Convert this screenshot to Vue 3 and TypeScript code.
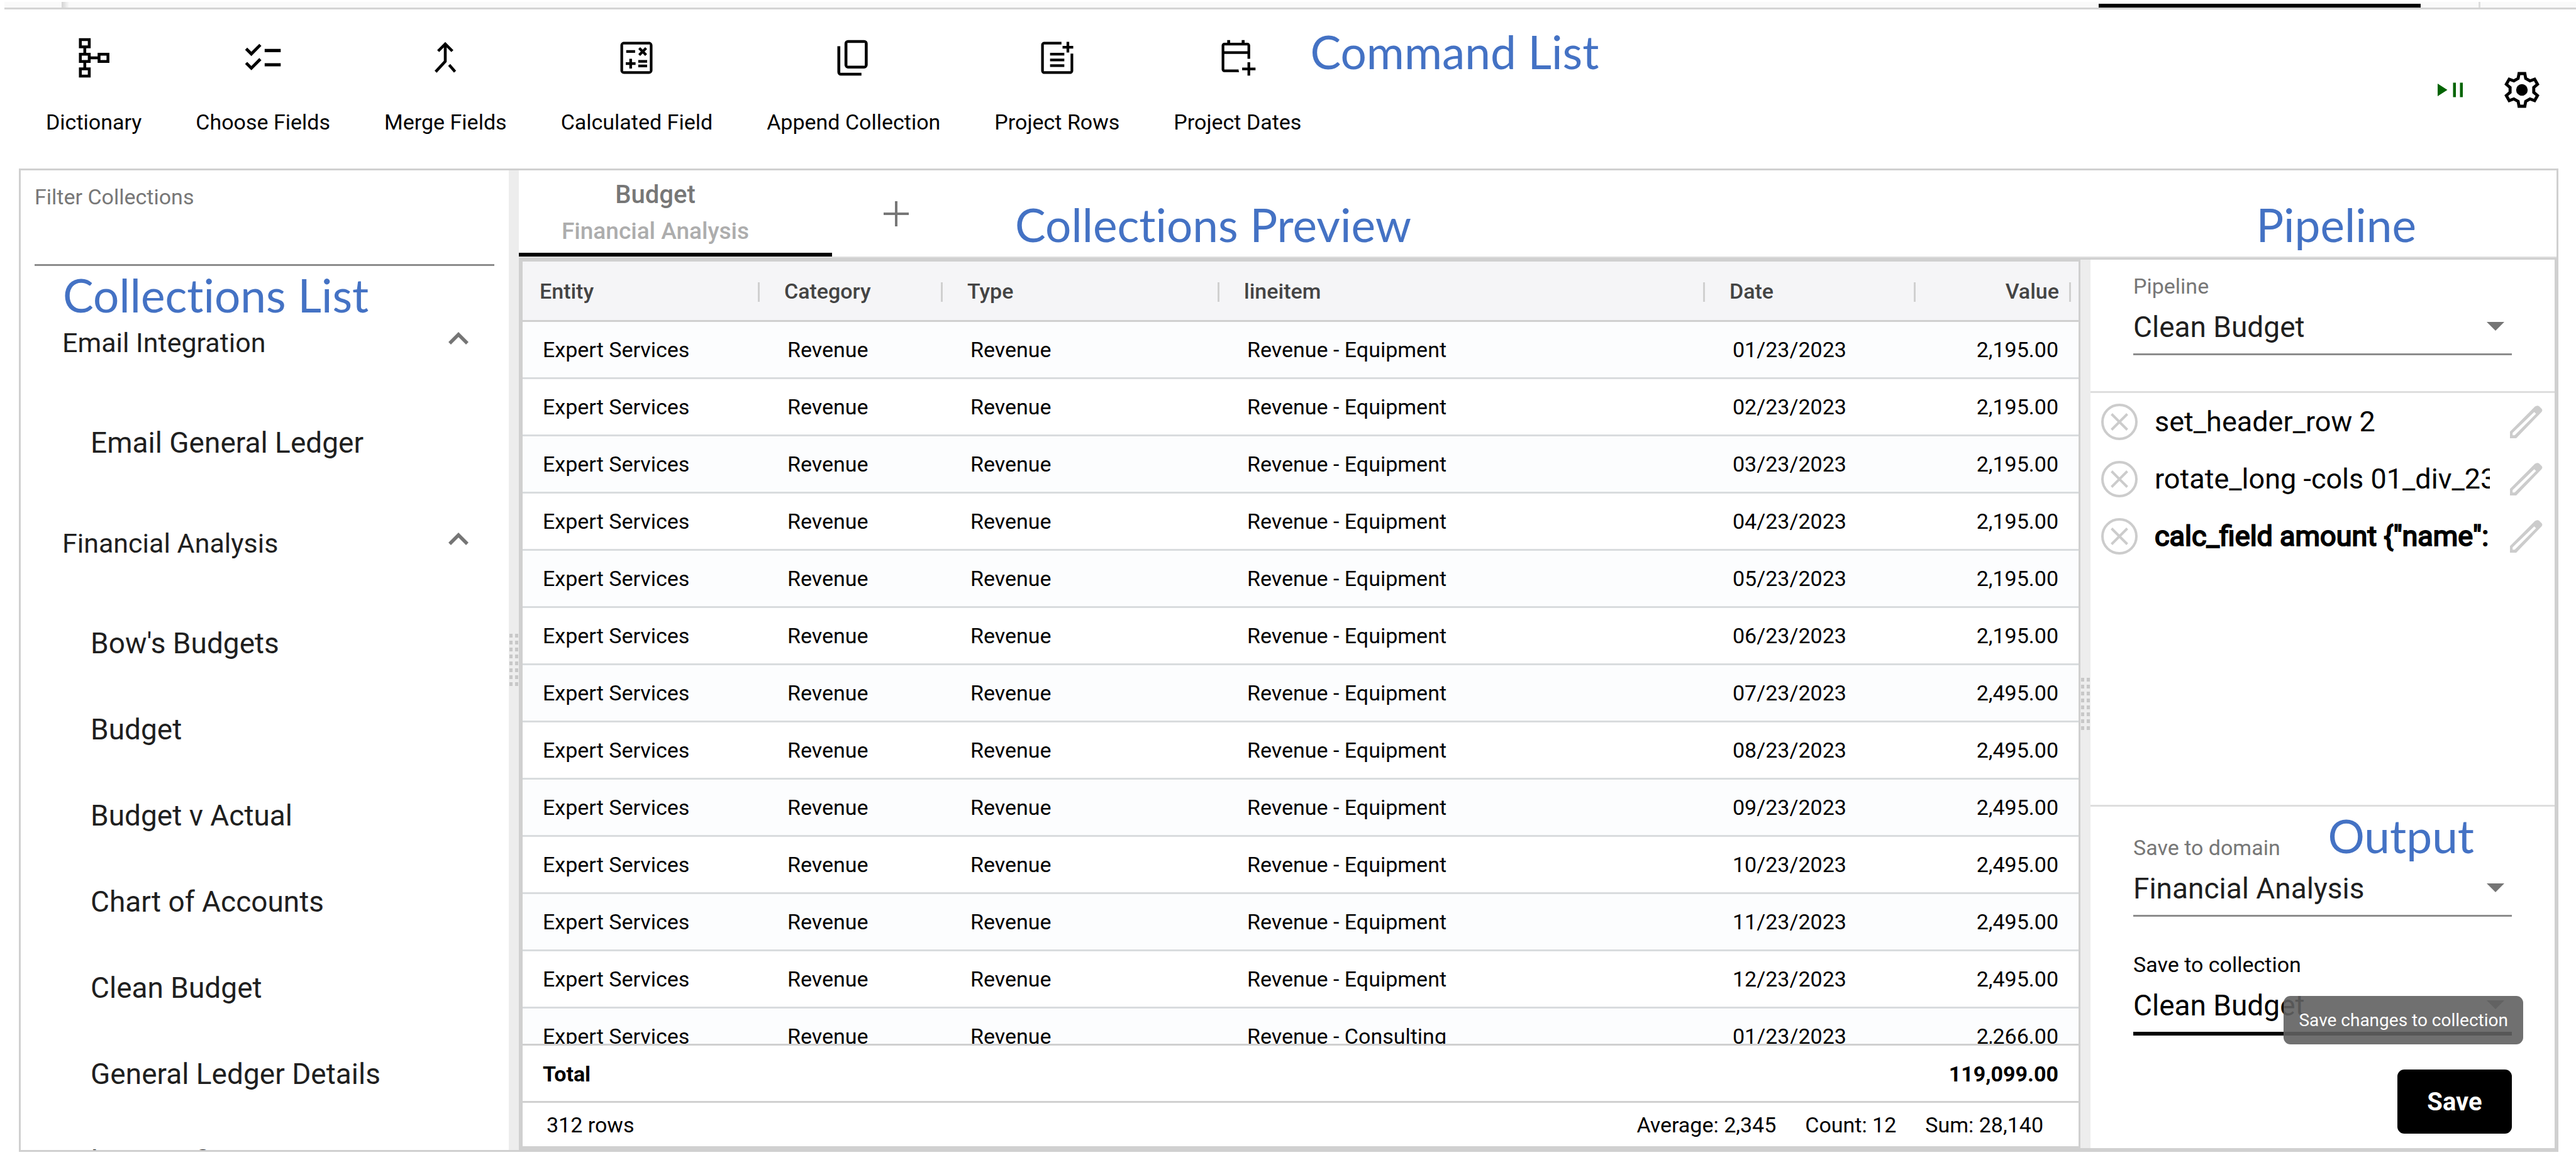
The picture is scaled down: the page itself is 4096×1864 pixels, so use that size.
<script setup lang="ts">
import { ref } from 'vue'

interface Command {
  label: string
  viewBox: string
  path?: string
  strokes?: string
}

interface Row {
  entity: string
  category: string
  type: string
  lineitem: string
  date: string
  value: string
}

interface Group {
  name: string
  items: string[]
}

interface Step {
  text: string
  active: boolean
}

const commands: Command[] = [
  {
    label: 'Dictionary',
    viewBox: '0 0 24 24',
    strokes: 'M4.5 1.8h5v4h-5zM4.5 10h5v4h-5zM4.5 18.2h5v4h-5zM15 10h5v4h-5zM7 5.8V10M7 14V18.2M9.5 12H15',
  },
  {
    label: 'Choose Fields',
    viewBox: '0 0 24 24',
    path: 'M22 7h-9v1.8h9V7zm0 8h-9v1.8h9v-1.8zM5.54 11L2 7.46l1.2-1.2 2.34 2.3 4.44-4.44 1.200 1.200L5.54 11zm0 8L2 15.46l1.2-1.2 2.34 2.3 4.44-4.44 1.200 1.200L5.54 19z',
  },
  {
    label: 'Merge Fields',
    viewBox: '0 0 24 24',
    strokes: 'M8 8.2L12 4.2L16 8.2M12 4.4V14L6.6 19.8M14.2 16L17.5 19.8',
  },
  {
    label: 'Calculated Field',
    viewBox: '0 0 24 24',
    path: 'M19 3H5c-1.1 0-2 .9-2 2v14c0 1.1.9 2 2 2h14c1.1 0 2-.9 2-2V5c0-1.1-.9-2-2-2zm0 16.500H4.500V4.500h15v15H19zM6.250 7.720h5v1.500h-5zM13 15.750h5v1.500h-5zM13 13.250h5v1.500h-5zM8 18h1.500v-2h2v-1.500h-2v-2H8v2H6V16h2zM14.090 10.950l1.410-1.410 1.410 1.410 1.060-1.060-1.410-1.420 1.410-1.410L16.910 6 15.500 7.410 14.090 6l-1.060 1.060 1.410 1.410-1.410 1.420z',
  },
  {
    label: 'Append Collection',
    viewBox: '0 -960 960 960',
    path: 'M360-240q-33 0-56.500-23.500T280-320v-480q0-33 23.500-56.500T360-880h360q33 0 56.500 23.500T800-800v480q0 33-23.500 56.500T720-240H360Zm-15-65h390v-510H345v510ZM200-80q-33 0-56.500-23.500T120-160v-580h65v595h475v65H200Z',
  },
  {
    label: 'Project Rows',
    viewBox: '0 0 24 24',
    path: 'M14.400 3H4.800C3.800 3 3 3.800 3 4.800v14.400c0 1 .8 1.800 1.800 1.800h14.400c1 0 1.800-.8 1.800-1.800V9.600h-1.500v9.900h-15v-15h9.900V3zM17.250 3h1.500v2.250H21v1.500h-2.250V9h-1.500V6.750H15v-1.500h2.250V3zM8 9.200h8v1.500H8zM8 12.400h8v1.500H8zM8 15.600h8v1.500H8z',
  },
  {
    label: 'Project Dates',
    viewBox: '0 -960 960 960',
    path: 'M700-80v-120H580v-60h120v-120h60v120h120v60H760v120h-60Zm-520-80q-24 0-42-18t-18-42v-540q0-24 18-42t42-18h65v-60h65v60h260v-60h65v60h65q24 0 42 18t18 42v302q-15-2-30-2t-30 2v-112H180v350h320q0 15 3 30t8 30H180Zm0-470h520v-130H180v130Z',
  },
]

const groups: Group[] = [
  { name: 'Email Integration', items: ['Email General Ledger'] },
  {
    name: 'Financial Analysis',
    items: [
      "Bow's Budgets",
      'Budget',
      'Budget v Actual',
      'Chart of Accounts',
      'Clean Budget',
      'General Ledger Details',
      'Income Statement',
    ],
  },
]

const columns: string[] = ['Entity', 'Category', 'Type', 'lineitem', 'Date', 'Value']

const monthly: string[] = [
  '2,195.00', '2,195.00', '2,195.00', '2,195.00', '2,195.00', '2,195.00',
  '2,495.00', '2,495.00', '2,495.00', '2,495.00', '2,495.00', '2,495.00',
]

const base = { entity: 'Expert Services', category: 'Revenue', type: 'Revenue' }

const rows: Row[] = [
  ...monthly.map((value, i) => ({
    ...base,
    lineitem: 'Revenue - Equipment',
    date: `${String(i + 1).padStart(2, '0')}/23/2023`,
    value,
  })),
  { ...base, lineitem: 'Revenue - Consulting', date: '01/23/2023', value: '2,266.00' },
]

const steps: Step[] = [
  { text: 'set_header_row 2', active: false },
  { text: 'rotate_long -cols 01_div_23', active: false },
  { text: 'calc_field amount {"name": "amount"}', active: true },
]

const filter = ref('')
const pipeline = ref('Clean Budget')
const domain = ref('Financial Analysis')
const collection = ref('Clean Budget')
</script>

<template>
  <div class="page">
    <div class="strip">
      <span class="strip-edge"></span>
      <span class="strip-active"></span>
      <span class="strip-sep"></span>
    </div>

    <header class="toolbar">
      <nav class="commands">
        <button v-for="c in commands" :key="c.label" type="button" class="command">
          <svg :viewBox="c.viewBox" aria-hidden="true">
            <path v-if="c.path" :d="c.path" fill="#000" fill-rule="evenodd" />
            <path v-if="c.strokes" :d="c.strokes" fill="none" stroke="#000" stroke-width="1.6" />
          </svg>
          <span>{{ c.label }}</span>
        </button>
      </nav>
      <div class="note note-command">Command List</div>
      <div class="tools">
        <button type="button" class="plain" aria-label="Run or pause">
          <svg class="run" viewBox="0 0 40 24" aria-hidden="true">
            <path d="M0 2L15.500 12L0 22ZM24.500 0.500h4.500v23h-4.500zM35.500 0.500h4.500v23h-4.500z" fill="#006400" />
          </svg>
        </button>
        <button type="button" class="plain" aria-label="Settings">
          <svg class="gear" viewBox="-34 -34 68 68" aria-hidden="true">
            <path
              fill="none"
              stroke="#000"
              stroke-width="4.800"
              d="M-4.600 -26L4.600 -26L6 -18.200L12.800 -14.300L20.200 -17L24.800 -9L18.800 -3.900L18.800 3.900L24.800 9L20.200 17L12.800 14.300L6 18.200L4.600 26L-4.600 26L-6 18.200L-12.800 14.300L-20.200 17L-24.800 9L-18.800 3.900L-18.800 -3.900L-24.800 -9L-20.200 -17L-12.800 -14.300L-6 -18.200Z"
            />
            <circle r="9.200" fill="#000" />
          </svg>
        </button>
      </div>
    </header>

    <main class="frame">
      <aside class="collections">
        <div class="field filter">
          <label for="filter">Filter Collections</label>
          <input id="filter" v-model="filter" type="text" />
        </div>
        <div class="note note-list">Collections List</div>
        <div class="tree">
          <section v-for="g in groups" :key="g.name">
            <button type="button" class="group">
              <span>{{ g.name }}</span>
              <svg viewBox="0 0 32 20" aria-hidden="true">
                <path d="M2 18L16 4L30 18" fill="none" stroke="#757575" stroke-width="5.600" />
              </svg>
            </button>
            <a v-for="item in g.items" :key="item" href="#" class="item">{{ item }}</a>
          </section>
        </div>
      </aside>

      <div class="splitter"><span class="grip"></span></div>

      <div class="work">
        <div class="tabs">
          <button type="button" class="tab">
            <span class="tab-title">Budget</span>
            <span class="tab-sub">Financial Analysis</span>
          </button>
          <button type="button" class="add" aria-label="Add tab">
            <svg viewBox="0 0 40 40" aria-hidden="true">
              <path d="M20 0V40M0 20H40" stroke="#777" stroke-width="4" />
            </svg>
          </button>
          <div class="note note-preview">Collections Preview</div>
          <div class="note note-pipeline">Pipeline</div>
        </div>

        <div class="panes">
          <section class="grid">
            <div class="grid-body">
              <table>
                <colgroup>
                  <col class="c-entity" /><col class="c-category" /><col class="c-type" />
                  <col /><col class="c-date" /><col class="c-value" />
                </colgroup>
                <thead>
                  <tr>
                    <th v-for="c in columns" :key="c" scope="col" :class="{ num: c === 'Value' }">{{ c }}</th>
                  </tr>
                </thead>
                <tbody>
                  <tr v-for="(r, i) in rows" :key="i">
                    <td>{{ r.entity }}</td>
                    <td>{{ r.category }}</td>
                    <td>{{ r.type }}</td>
                    <td>{{ r.lineitem }}</td>
                    <td>{{ r.date }}</td>
                    <td class="num">{{ r.value }}</td>
                  </tr>
                </tbody>
              </table>
            </div>
            <div class="total">
              <span>Total</span>
              <span>119,099.00</span>
            </div>
            <div class="status">
              <span class="count">312 rows</span>
              <span>Average: 2,345</span>
              <span>Count: 12</span>
              <span>Sum: 28,140</span>
            </div>
          </section>

          <div class="splitter"><span class="grip"></span></div>

          <aside class="side">
            <div class="source">
              <div class="field">
                <label for="pipeline">Pipeline</label>
                <select id="pipeline" v-model="pipeline">
                  <option>Clean Budget</option>
                </select>
                <svg class="arrow" viewBox="0 0 28 14" aria-hidden="true"><path d="M0 0H28L14 14Z" /></svg>
              </div>
            </div>

            <ul class="steps">
              <li v-for="s in steps" :key="s.text" :class="{ active: s.active }">
                <button type="button" class="plain" aria-label="Remove step">
                  <svg class="remove" viewBox="0 0 58 58" aria-hidden="true">
                    <circle cx="29" cy="29" r="27" />
                    <path d="M16.500 16.500L41.500 41.500M41.500 16.500L16.500 41.500" />
                  </svg>
                </button>
                <span class="step">{{ s.text }}</span>
                <button type="button" class="plain" aria-label="Edit step">
                  <svg class="pencil" viewBox="0 0 52 52" aria-hidden="true">
                    <path
                      fill-rule="evenodd"
                      d="M0 52V41.400L39.500 1.700Q43.500 -1.200 46.500 1.300L50.500 5.300Q52.500 7.800 50 10.600L10 52ZM4.200 43.400V47.300H7.500L41.500 13L38.600 10.200Z"
                    />
                  </svg>
                </button>
              </li>
            </ul>

            <div class="output">
              <div class="note note-output">Output</div>
              <div class="field">
                <label for="domain">Save to domain</label>
                <select id="domain" v-model="domain">
                  <option>Financial Analysis</option>
                </select>
                <svg class="arrow" viewBox="0 0 28 14" aria-hidden="true"><path d="M0 0H28L14 14Z" /></svg>
              </div>
              <div class="field focused">
                <label for="collection">Save to collection</label>
                <select id="collection" v-model="collection">
                  <option>Clean Budget</option>
                </select>
                <svg class="arrow" viewBox="0 0 28 14" aria-hidden="true"><path d="M0 0H28L14 14Z" /></svg>
              </div>
              <button type="button" class="save">Save</button>
              <div class="tooltip" role="tooltip">Save changes to collection</div>
            </div>
          </aside>
        </div>
      </div>
    </main>
  </div>
</template>

<style>
body {
  margin: 0;
  background: #fff;
}
</style>

<style scoped>
* {
  box-sizing: border-box;
}

.page {
  display: flex;
  flex-direction: column;
  height: 100vh;
  overflow: hidden;
  padding-bottom: 32px;
  font-family: Roboto, "Liberation Sans", sans-serif;
  font-size: 34px;
  color: #000;
}

button,
input,
select {
  margin: 0;
  padding: 0;
  border: 0;
  background: none;
  font: inherit;
  color: inherit;
  outline: none;
}

svg {
  display: block;
  flex: none;
}

/* Bottom edge of the application tab strip */
.strip {
  display: flex;
  flex: none;
  height: 12px;
  margin: 3px 0 0 7px;
  border-bottom: 3px solid #d4d4d4;
  background: #fafafa;
}

.strip-edge {
  width: 12px;
  margin-left: 91px;
  background: linear-gradient(to right, #d4d4d4, #fafafa);
}

.strip-active {
  width: 512px;
  height: 6px;
  margin: 3px 92px 0 auto;
  background: #000;
}

.strip-sep {
  width: 3px;
  margin-right: 152px;
  background: #ddd;
}

.toolbar {
  display: flex;
  flex: none;
  align-items: flex-start;
  height: 253px;
  padding: 0 52px 0 73px;
}

.commands {
  display: flex;
  gap: 86px;
  padding-top: 43px;
}

.command {
  display: flex;
  flex-direction: column;
  align-items: center;
  gap: 48px;
  line-height: 40px;
  white-space: nowrap;
}

.command svg {
  width: 68px;
  height: 68px;
}

.tools {
  display: flex;
  align-items: center;
  gap: 60px;
  height: 256px;
  margin-left: auto;
}

.run {
  width: 40px;
  height: 24px;
}

.gear {
  width: 68px;
  height: 68px;
}

.note {
  font-family: Lato, "Noto Sans", sans-serif;
  font-size: 73px;
  font-variant-ligatures: none;
  line-height: 78px;
  color: #4472c4;
  white-space: nowrap;
}

.note-command {
  padding: 28px 0 0 14px;
}

.note-preview {
  margin: 34px 0 0 87px;
}

.note-pipeline {
  margin: 34px 223px 0 auto;
}

.note-list {
  position: absolute;
  top: 159px;
  left: 67px;
}

.note-output {
  position: absolute;
  top: 7px;
  right: 128px;
}

.frame {
  display: flex;
  flex: 1;
  min-height: 0;
  margin: 0 28px 0 30px;
  border: 3px solid #d0d0d0;
}

.collections {
  position: relative;
  display: flex;
  flex-direction: column;
  width: 776px;
  min-height: 0;
  overflow: hidden;
}

.field {
  position: relative;
  display: flex;
  flex-direction: column;
  border-bottom: 3px solid #8c8c8c;
}

.field label {
  line-height: 44px;
  color: #777;
}

.field input,
.field select {
  width: 100%;
  height: 85px;
  font-size: 46px;
  color: #1f1f1f;
  appearance: none;
}

.field.focused {
  border-bottom: 6px solid #000;
}

.field.focused label,
.field.focused select {
  color: #000;
}

.arrow {
  position: absolute;
  top: 79px;
  right: 12px;
  width: 28px;
  height: 14px;
  fill: #757575;
  pointer-events: none;
}

.filter {
  margin: 20px 23px 31px 22px;
}

.tree {
  flex: 1;
  min-height: 0;
  overflow: hidden;
}

.group {
  display: flex;
  align-items: center;
  justify-content: space-between;
  width: 100%;
  height: 182px;
  padding: 0 64px 0 66px;
  font-size: 43px;
  color: #1f1f1f;
}

.group svg {
  width: 32px;
  height: 20px;
  margin-bottom: 14px;
}

.item {
  display: block;
  padding-left: 111px;
  font-size: 46px;
  line-height: 137px;
  color: #1f1f1f;
  text-decoration: none;
  white-space: nowrap;
}

.splitter {
  display: flex;
  flex: none;
  align-items: center;
  justify-content: center;
  width: 16px;
  background: #ededed;
}

.grip {
  width: 14px;
  height: 84px;
  background:
    repeating-linear-gradient(to bottom, transparent 0 6px, #ededed 6px 11px),
    repeating-linear-gradient(to right, #c8c8c8 0 5px, #ededed 5px 9px);
}

.work {
  display: flex;
  flex: 1;
  flex-direction: column;
  min-width: 0;
}

.tabs {
  display: flex;
  flex: none;
  align-items: center;
  height: 139px;
  border-bottom: 2px solid #dedede;
}

.tab {
  display: flex;
  flex-direction: column;
  align-items: center;
  width: 498px;
  height: 137px;
  padding: 10px 64px 0 0;
  border-bottom: 6px solid #000;
  font-weight: 500;
  line-height: 58px;
}

.tab-title {
  font-size: 40px;
  color: #777;
}

.tab-sub {
  font-size: 37px;
  color: #adadad;
}

.add {
  display: flex;
  justify-content: center;
  width: 204px;
}

.add svg {
  width: 40px;
  height: 40px;
}

.panes {
  display: flex;
  flex: 1;
  min-height: 0;
  border: 3px solid #d0d0d0;
}

.grid {
  display: flex;
  flex: 1;
  flex-direction: column;
  min-width: 0;
  border: 3px solid #d0d0d0;
}

.grid-body {
  flex: 1;
  min-height: 0;
  overflow: hidden;
}

table {
  width: 100%;
  border-spacing: 0;
  table-layout: fixed;
}

.c-entity {
  width: 389px;
}

.c-category {
  width: 291px;
}

.c-type {
  width: 440px;
}

.c-date {
  width: 335px;
}

.c-value {
  width: 247px;
}

th {
  position: relative;
  height: 96px;
  padding: 0 31px 0 27px;
  border-bottom: 3px solid #d0d0d0;
  background: #f5f5f7;
  color: #444;
  font-weight: 500;
  text-align: left;
}

th::after {
  content: "";
  position: absolute;
  top: 33px;
  right: 12px;
  width: 3px;
  height: 31px;
  background: #d0d0d0;
}

td {
  height: 91px;
  padding: 0 32px;
  border-bottom: 3px solid #d9dcde;
  white-space: nowrap;
}

tbody tr:nth-child(odd) {
  background: #fcfdfe;
}

.num {
  text-align: right;
}

.total {
  display: flex;
  flex: none;
  justify-content: space-between;
  height: 91px;
  padding: 0 32px;
  border-top: 3px solid #d0d0d0;
  font-weight: 700;
  line-height: 91px;
}

.status {
  display: flex;
  flex: none;
  gap: 46px;
  height: 72px;
  padding: 0 56px 0 38px;
  border-top: 3px solid #d0d0d0;
  line-height: 70px;
}

.count {
  margin-right: auto;
}

.side {
  display: flex;
  flex: none;
  flex-direction: column;
  width: 738px;
}

.source {
  padding: 20px 68px 57px;
  border-bottom: 3px solid #dedede;
}

.steps {
  flex: 1;
  min-height: 0;
  margin: 0;
  padding: 0;
  list-style: none;
}

.steps li {
  display: flex;
  align-items: center;
  height: 91px;
  padding: 0 19px 0 17px;
}

.step {
  flex: 1;
  min-width: 0;
  margin: 0 32px 0 27px;
  overflow: hidden;
  font-size: 45px;
  line-height: 60px;
  white-space: nowrap;
}

.active .step {
  -webkit-text-stroke: 2px #000;
}

.remove {
  width: 58px;
  height: 58px;
  fill: none;
  stroke: #ccc;
  stroke-width: 4;
}

.pencil {
  width: 52px;
  height: 52px;
  fill: #ccc;
}

.output {
  position: relative;
  display: flex;
  flex: none;
  flex-direction: column;
  gap: 54px;
  padding: 43px 68px 23px;
  border-top: 3px solid #dedede;
}

.save {
  align-self: flex-end;
  width: 182px;
  height: 102px;
  border-radius: 11px;
  background: #000;
  color: #fff;
  font-size: 40px;
  font-weight: 700;
}

.tooltip {
  position: absolute;
  right: 50px;
  bottom: 165px;
  padding: 0 24px;
  border-radius: 11px;
  background: rgba(97, 97, 97, 0.9);
  color: #fff;
  font-size: 28px;
  font-weight: 400;
  line-height: 77px;
  white-space: nowrap;
}
</style>
